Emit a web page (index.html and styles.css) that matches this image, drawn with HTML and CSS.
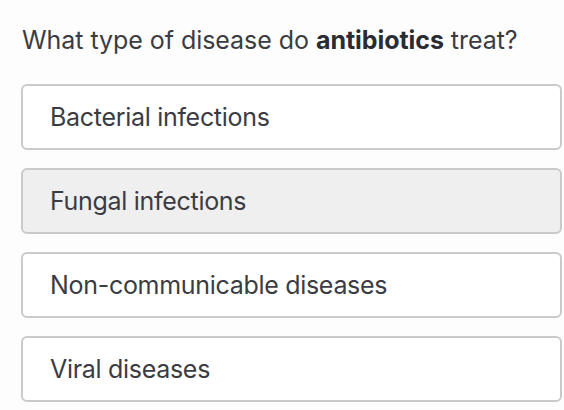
FILE: index.html
```html
<!DOCTYPE html>
<html>
<head>
<meta charset="utf-8">
<link rel="stylesheet" href="styles.css">
</head>
<body>
<div class="quiz">
  <h1 class="question">What type of disease do <b>antibiotics</b> treat?</h1>
  <div class="options">
    <div class="option">Bacterial infections</div>
    <div class="option option-hover">Fungal infections</div>
    <div class="option">Non-communicable diseases</div>
    <div class="option">Viral diseases</div>
  </div>
</div>
</body>
</html>
```
FILE: styles.css
```css
html, body {
  margin: 0;
  padding: 0;
  background: #fdfdfd;
}
.quiz {
  padding: 24px 2px 0 21px;
  font-family: "Inter", "Liberation Sans", sans-serif;
  color: #3b3c42;
}
.question {
  margin: 0 0 0 1px;
  font-size: 25px;
  font-weight: 400;
  line-height: 32px;
  letter-spacing: -0.05px;
}
.question b {
  font-weight: 700;
  color: #2a2c33;
}
.options {
  margin-top: 28px;
  display: flex;
  flex-direction: column;
  gap: 18px;
}
.option {
  height: 62px;
  box-sizing: content-box;
  border: 2px solid #cacaca;
  border-radius: 6px;
  background: #ffffff;
  display: flex;
  align-items: center;
  padding-left: 27px;
  font-size: 25px;
  letter-spacing: -0.3px;
}
.option-hover {
  background: #efefef;
}
```
